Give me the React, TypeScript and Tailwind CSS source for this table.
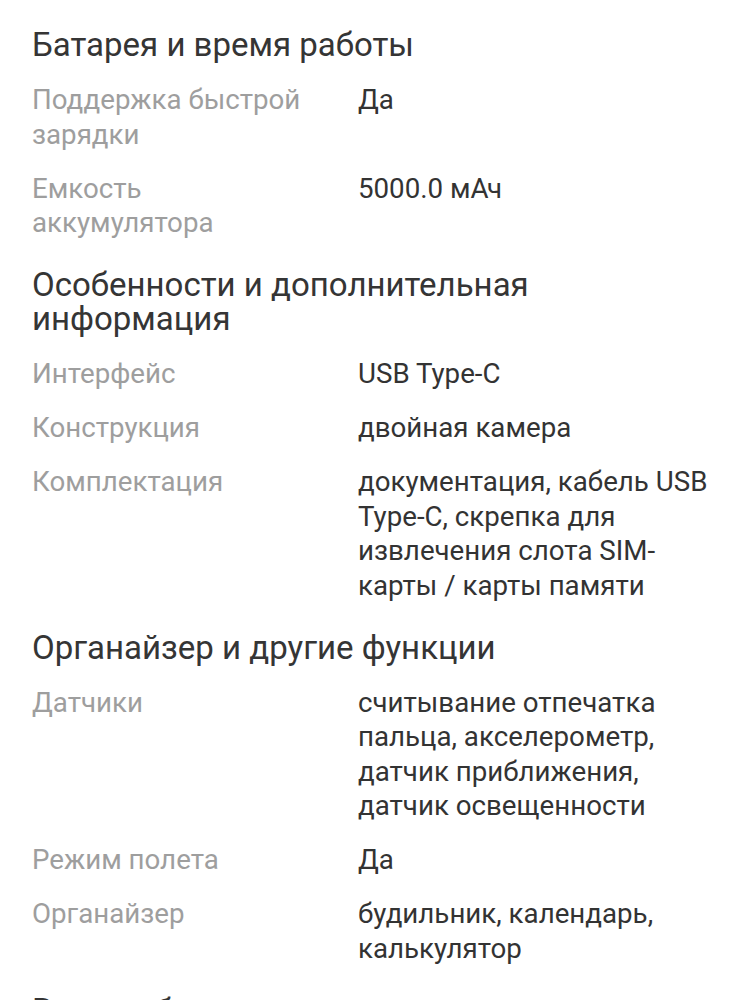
const SECTIONS: { title: string; rows: [string, string][] }[] = [
  {
    title: 'Батарея и время работы',
    rows: [
      ['Поддержка быстрой зарядки', 'Да'],
      ['Емкость аккумулятора', '5000.0 мАч'],
    ],
  },
  {
    title: 'Особенности и дополнительная информация',
    rows: [
      ['Интерфейс', 'USB Type-C'],
      ['Конструкция', 'двойная камера'],
      ['Комплектация', 'документация, кабель USB Type-C, скрепка для извлечения слота SIM-карты / карты памяти'],
    ],
  },
  {
    title: 'Органайзер и другие функции',
    rows: [
      ['Датчики', 'считывание отпечатка пальца, акселерометр, датчик приближения, датчик освещенности'],
      ['Режим полета', 'Да'],
      ['Органайзер', 'будильник, календарь, калькулятор'],
    ],
  },
  {
    title: 'Вес и габариты',
    rows: [],
  },
]

export default function App() {
  return (
    <div className="bg-white min-h-screen px-8 pt-[28px] font-['Roboto',sans-serif]">
      <div className="flex flex-col gap-[27.5px]">
        {SECTIONS.map(s => (
          <div key={s.title}>
            <h2 className="text-[33px] leading-[34px] text-[#353535] font-normal">{s.title}</h2>
            {s.rows.length > 0 && (
              <div className="mt-[21px] flex flex-col gap-[19.5px]">
                {s.rows.map(([k, v]) => (
                  <div key={k} className="flex text-[27.7px] leading-[34.5px]">
                    <div className="w-[326px] shrink-0 pr-[36px] text-[#9e9e9e]">{k}</div>
                    <div className="flex-1 text-[#333333]">{v}</div>
                  </div>
                ))}
              </div>
            )}
          </div>
        ))}
      </div>
    </div>
  )
}
